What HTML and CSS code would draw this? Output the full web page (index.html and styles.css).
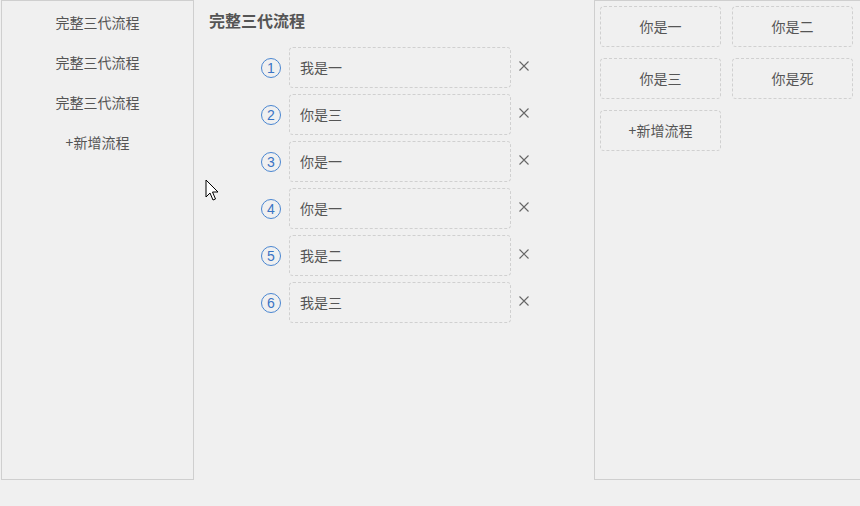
FILE: index.html
```html
<!DOCTYPE html>
<html lang="zh">
<head>
<meta charset="utf-8">
<title>流程</title>
<link rel="stylesheet" href="styles.css">
</head>
<body>
<div class="page">
  <aside class="left">
    <div class="left-item">完整三代流程</div>
    <div class="left-item">完整三代流程</div>
    <div class="left-item">完整三代流程</div>
    <div class="left-item">+新增流程</div>
  </aside>
  <main class="middle">
    <h2 class="title">完整三代流程</h2>
    <ol class="steps">
      <li class="step"><span class="num">1</span><div class="box">我是一</div><svg class="close" width="10" height="10" viewBox="0 0 10 10"><path d="M0.5 0.5 L9.5 9.5 M9.5 0.5 L0.5 9.5" stroke="#666" stroke-width="1.1" fill="none"/></svg></li>
      <li class="step"><span class="num">2</span><div class="box">你是三</div><svg class="close" width="10" height="10" viewBox="0 0 10 10"><path d="M0.5 0.5 L9.5 9.5 M9.5 0.5 L0.5 9.5" stroke="#666" stroke-width="1.1" fill="none"/></svg></li>
      <li class="step"><span class="num">3</span><div class="box">你是一</div><svg class="close" width="10" height="10" viewBox="0 0 10 10"><path d="M0.5 0.5 L9.5 9.5 M9.5 0.5 L0.5 9.5" stroke="#666" stroke-width="1.1" fill="none"/></svg></li>
      <li class="step"><span class="num">4</span><div class="box">你是一</div><svg class="close" width="10" height="10" viewBox="0 0 10 10"><path d="M0.5 0.5 L9.5 9.5 M9.5 0.5 L0.5 9.5" stroke="#666" stroke-width="1.1" fill="none"/></svg></li>
      <li class="step"><span class="num">5</span><div class="box">我是二</div><svg class="close" width="10" height="10" viewBox="0 0 10 10"><path d="M0.5 0.5 L9.5 9.5 M9.5 0.5 L0.5 9.5" stroke="#666" stroke-width="1.1" fill="none"/></svg></li>
      <li class="step"><span class="num">6</span><div class="box">我是三</div><svg class="close" width="10" height="10" viewBox="0 0 10 10"><path d="M0.5 0.5 L9.5 9.5 M9.5 0.5 L0.5 9.5" stroke="#666" stroke-width="1.1" fill="none"/></svg></li>
    </ol>
  </main>
  <aside class="right">
    <div class="card">你是一</div>
    <div class="card">你是二</div>
    <div class="card">你是三</div>
    <div class="card">你是死</div>
    <div class="card">+新增流程</div>
  </aside>
</div>
<svg class="cursor" width="14" height="24" viewBox="0 0 14 24"><path d="M1 1 L1 18 L5 14 L8 21 L10.5 20 L7.5 13 L13 13 Z" fill="#fff" stroke="#000" stroke-width="1" stroke-linejoin="miter"/></svg>
</body>
</html>
```
FILE: styles.css
```css
html, body {
  margin: 0;
  padding: 0;
  background: #f0f0f0;
  font-family: "Noto Sans CJK SC", "Microsoft YaHei", sans-serif;
  color: #555;
  font-size: 14px;
}
.page {
  display: flex;
  align-items: flex-start;
  width: 860px;
  overflow: hidden;
}
.left {
  flex: none;
  margin-left: 1px;
  width: 191px;
  border: 1px solid #cfcfcf;
  padding-top: 1px;
  height: 477px;
}
.left-item {
  height: 40px;
  line-height: 40px;
  text-align: center;
  color: #555;
}
.middle {
  width: 385px;
  padding: 10px 0 0 15px;
  flex: none;
}
.title {
  margin: 0;
  font-size: 16px;
  font-weight: bold;
  line-height: 20px;
  color: #555;
}
.steps {
  list-style: none;
  margin: 17px 0 0 0;
  padding: 0 0 0 52px;
  display: flex;
  flex-direction: column;
  gap: 6px;
}
.step {
  display: flex;
  align-items: center;
  height: 41px;
}
.num {
  width: 18px;
  height: 18px;
  border: 1px solid #4a86d1;
  border-radius: 50%;
  color: #3b74c4;
  font-family: "Liberation Sans", Arial, sans-serif;
  font-size: 14px;
  line-height: 18px;
  text-align: center;
  margin-right: 8px;
  flex: none;
}
.box {
  width: 210px;
  height: 39px;
  line-height: 39px;
  border: 1px dashed #d0d0d0;
  border-radius: 4px;
  padding-left: 10px;
  flex: none;
}
.close {
  margin-left: 8px;
  margin-top: -4px;
  flex: none;
}
.right {
  flex: none;
  width: 280px;
  height: 468px;
  border: 1px solid #cfcfcf;
  padding: 5px;
  display: grid;
  grid-template-columns: 121px 121px;
  grid-auto-rows: 41px;
  column-gap: 11px;
  row-gap: 11px;
  align-content: start;
}
.card {
  border: 1px dashed #d0d0d0;
  border-radius: 4px;
  text-align: center;
  line-height: 39px;
  color: #555;
}
.cursor {
  position: absolute;
  left: 205px;
  top: 179px;
}
```
